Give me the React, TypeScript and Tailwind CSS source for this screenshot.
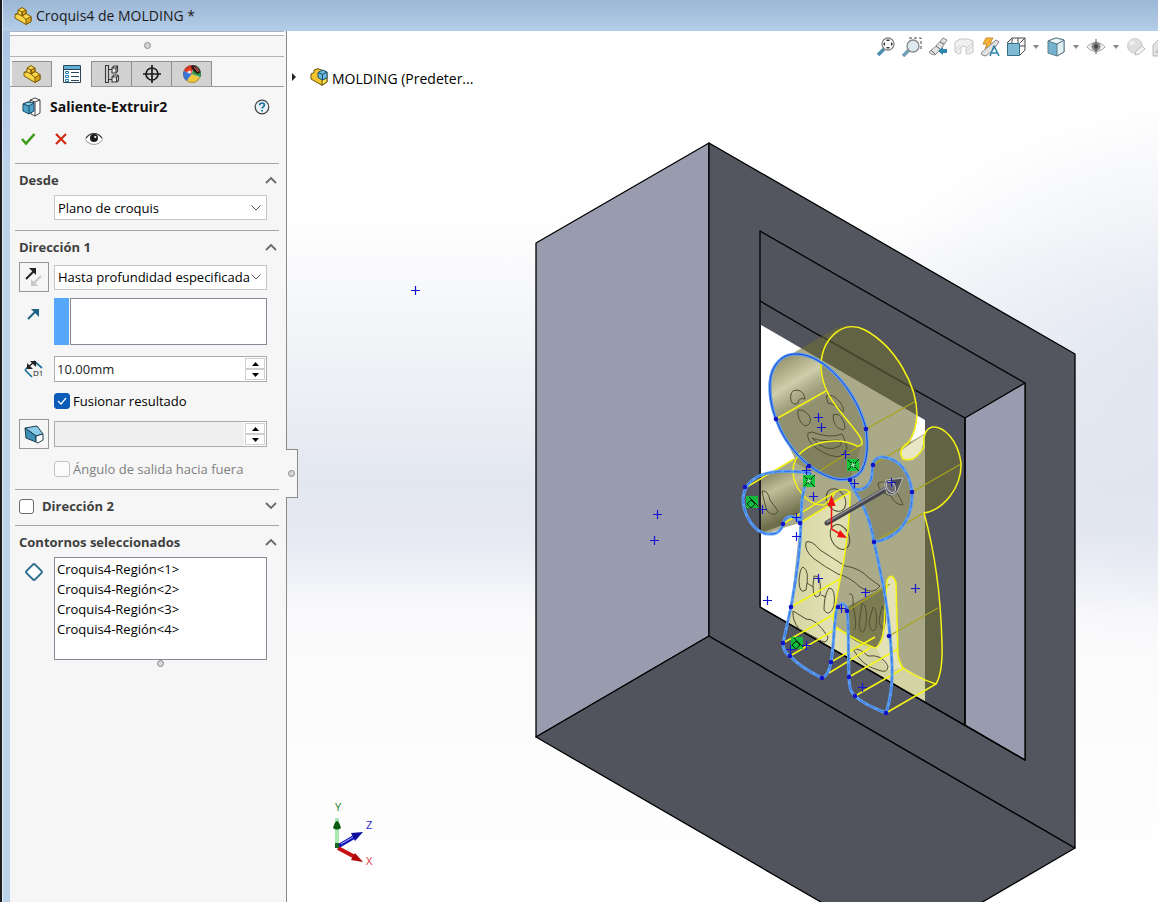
import React, { useState } from 'react';

interface SectionProps {
  title: string;
  open?: boolean;
  children?: React.ReactNode;
}

interface SpinnerProps {
  label: string;
  value: string;
  disabled?: boolean;
}

interface DropdownProps {
  label: string;
  options: string[];
}

const YELLOW = '#f4f414';
const SKETCH = '#5aa0f6';
const NAVY = '#1212c8';

const PartIcon = () => (
  <svg viewBox="0 0 18 18" className="h-[18px] w-[18px] shrink-0" stroke="#7a5a08" strokeWidth="1" strokeLinejoin="round">
    <path d="M4 3l4-2.500 4 2.500v3.500l5 3v5l-5 3-11-6.500V7.500L4 6z" fill="#f9d548" />
    <path d="M8 5l4-2v3.500L8 9zM12 12.500l5-3v5l-5 3z" fill="#dda51c" />
    <path d="M4 3l4 2v4l-4-2M8 9l4 3.500M1 7.500l3-.5M8 9l4-2.500" fill="none" />
  </svg>
);

const AssemblyIcon = () => (
  <svg viewBox="0 0 18 18" className="h-[18px] w-[18px] shrink-0" stroke="#6b5210" strokeWidth="1" strokeLinejoin="round">
    <path d="M1 6l3-1.500V2L8 .7l9 3.500V14l-5 3.300L1 11z" fill="#f5c62c" />
    <path d="M12 11v6.300L17 14V9z" fill="#fbe04f" />
    <path d="M8 4.500L12.500 2 17 4v6l-4.500 2L8 9.500z" fill="#6db8dd" stroke="#15506f" />
    <path d="M8 4.500l4.500 2L17 4M12.500 6.500V12" fill="none" stroke="#15506f" />
  </svg>
);

const PropertyIcon = () => (
  <svg viewBox="0 0 18 18" className="h-[18px] w-[18px]" fill="none" stroke="#2c4656">
    <path d="M.5.5h17v17H.5z" fill="#fff" />
    <path d="M1 1h16v3H1z" fill="#5fb0d8" stroke="none" />
    <path d="M1 4.500h16M8 7.500h8M8 11.500h8M8 15.500h8" />
    <path d="M2.500 6.500h3v2h-3zM2.500 10.500h3v2h-3zM2.500 14.500h3v2h-3z" stroke="#2180b0" />
  </svg>
);

const ConfigIcon = () => (
  <svg viewBox="0 0 18 18" className="h-[18px] w-[18px]" fill="none" stroke="#3a3a3a" strokeWidth="1.100">
    <path d="M2.500.5h3v17h-3zM5.500 4.500H9M5.500 14.500H9" />
    <path d="M9 3l2-2h3.500v5l-1.500 2H9zM9 12l2-2h3.500l1 1v4.500L14 17H9z" fill="#e4e4e4" />
    <path d="M9 3h4v5M13 3l1.500-2M9 12h4.500v5M13.500 12l2-1" />
  </svg>
);

const TargetIcon = () => (
  <svg viewBox="0 0 18 18" className="h-[18px] w-[18px]" fill="none" stroke="#1d1d1d" strokeWidth="1.700">
    <circle cx="9" cy="9" r="6" />
    <path d="M9 0v18M0 9h18" />
  </svg>
);

const AppearanceIcon = () => (
  <svg viewBox="0 0 18 18" className="h-[18px] w-[18px]">
    <path d="M9 9L.6 6A9 9 0 0 1 10 0z" fill="#e03a22" />
    <path d="M9 9L.6 6a9 9 0 0 0 3 10z" fill="#3a78d8" />
    <path d="M9 9L3.500 16a9 9 0 0 0 13.500-3z" fill="#f0c63a" />
    <path d="M9 9l2-9a9 9 0 0 1 6.500 12z" fill="#2f9c4a" />
    <path d="M9 0a9 9 0 0 1 8.500 7L15 9Q10 7 8 2z" fill="#2a1414" />
    <path d="M11 2l4 5M13 1.500l3 5" stroke="#d86a5a" strokeWidth="1" />
    <circle cx="9" cy="9" r="8.500" fill="none" stroke="#55555577" />
    <ellipse cx="6.500" cy="7" rx="2" ry="1.500" fill="#fff" opacity=".8" />
  </svg>
);

const ExtrudeIcon = () => (
  <svg viewBox="0 0 20 20" className="h-5 w-5" strokeLinejoin="round">
    <path d="M8 3l5-2 5 2v13l-5 3-4-2z" fill="#fff" stroke="#444" />
    <path d="M13 5l5-2M13 5v14M13 5L8 3" fill="none" stroke="#444" />
    <path d="M1 7l5-2 6 1v8l-5 3-6-3z" fill="#4fa3cb" stroke="#174a63" />
    <path d="M1 7l6 2 5-3-6-1z" fill="#8fcbe6" stroke="#174a63" />
    <path d="M7 9v8" stroke="#174a63" />
  </svg>
);

const DraftIcon = () => (
  <svg viewBox="0 0 20 20" className="h-5 w-5" stroke="#1b3d4d" strokeLinejoin="round">
    <path d="M1 4l12-2 6 8-7 2z" fill="#8ccbe6" />
    <path d="M1 4l11 8v6L2 14z" fill="#3f90b6" />
    <path d="M12 12l7-2v6l-5 3-2-1z" fill="#fff" />
  </svg>
);

const Chevron = ({ down = false }: { down?: boolean }) => (
  <svg viewBox="0 0 12 8" className="h-2 w-3" fill="none" stroke="#6a6a6a" strokeWidth="1.800">
    <path d={down ? 'M1 1l5 5 5-5' : 'M1 7l5-5 5 5'} />
  </svg>
);

const Section: React.FC<SectionProps> = ({ title, open = true, children }) => (
  <section className="border-t border-[#a6a6a6]">
    <div className="flex h-[31px] items-center justify-between pt-px pr-[2px] pl-1">
      <h3 className="text-[13px] leading-4 font-bold text-[#404040]">{title}</h3>
      <button type="button" aria-label={title}>
        <Chevron down={!open} />
      </button>
    </div>
    {children}
  </section>
);

const Row: React.FC<{ icon?: React.ReactNode; children: React.ReactNode }> = ({ icon, children }) => (
  <div className="grid grid-cols-[30px_minmax(0,1fr)] items-center gap-[5px] pr-3 pl-1">
    <div className="flex justify-center">{icon}</div>
    {children}
  </div>
);

const Dropdown: React.FC<DropdownProps> = ({ label, options }) => (
  <div className="grid h-[25px] items-center border border-[#c6c6c6] bg-white">
    <select
      aria-label={label}
      className="col-start-1 row-start-1 h-[23px] w-full appearance-none bg-transparent pl-[3px] text-[13px] leading-5 text-black outline-none"
    >
      {options.map(o => (
        <option key={o}>{o}</option>
      ))}
    </select>
    <svg viewBox="0 0 10 6" className="pointer-events-none col-start-1 row-start-1 mr-[5px] h-[6px] w-[10px] justify-self-end" fill="none" stroke="#555">
      <path d="M.5.5L5 5 9.500.5" />
    </svg>
  </div>
);

const Spinner: React.FC<SpinnerProps> = ({ label, value, disabled = false }) => (
  <div className={disabled ? 'flex h-[26px] border border-[#ababab] bg-[#efefef]' : 'flex h-[26px] border border-[#ababab] bg-white'}>
    <input
      aria-label={label}
      defaultValue={value}
      disabled={disabled}
      className="min-w-0 flex-1 pl-[2px] text-[13px] leading-5 text-[#222] outline-none"
    />
    <div className="flex w-[22px] flex-col bg-white p-px">
      <button type="button" aria-label={`${label} +`} className="flex flex-1 items-center justify-center border border-[#cfcfcf]">
        <svg viewBox="0 0 7 4" className="h-1 w-[7px]"><path d="M0 4l3.500-4L7 4z" /></svg>
      </button>
      <button type="button" aria-label={`${label} -`} className="flex flex-1 items-center justify-center border border-[#cfcfcf]">
        <svg viewBox="0 0 7 4" className="h-1 w-[7px]"><path d="M0 0l3.500 4L7 0z" /></svg>
      </button>
    </div>
  </div>
);

const Dot = () => <span className="block h-[7px] w-[7px] rounded-full border border-[#8c8c8c] bg-[#d4d4d4]" />;

const tabs = [
  { id: 'Gestor de diseño', icon: <PartIcon /> },
  { id: 'Propiedades', icon: <PropertyIcon /> },
  { id: 'Configuraciones', icon: <ConfigIcon /> },
  { id: 'Cotas', icon: <TargetIcon /> },
  { id: 'Apariencias', icon: <AppearanceIcon /> },
];

const regions = [1, 2, 3, 4];

const PropertyPanel = () => {
  const [merge, setMerge] = useState(true);

  return (
    <aside className="relative z-10 w-[277px] shrink-0 border-r border-[#8a8a8a] bg-[#f6f6f6]">
      <div className="mr-[2px] flex h-[26px] items-center justify-center border-b border-[#b4b4b4]">
        <div className="flex h-full w-full flex-col items-center border-t border-[#a9b4c0]">
          <div className="h-1 w-full border-b border-[#b4b4b4] bg-white" />
          <div className="pt-[6px]"><Dot /></div>
        </div>
      </div>

      <div className="mr-[2px] flex border-b border-[#9a9a9a] pt-1 pl-[2px]" role="tablist">
        {tabs.map((tab, i) => (
          <button
            key={tab.id}
            type="button"
            role="tab"
            aria-label={tab.id}
            aria-selected={i === 1}
            className={
              i === 1
                ? '-mb-px flex h-[26px] w-10 items-center justify-center border-r border-[#8f8f8f] bg-[#f6f6f6]'
                : 'flex h-[25px] w-10 items-center justify-center border-t border-r border-[#8f8f8f] bg-[#d2d2d2]'
            }
          >
            {tab.icon}
          </button>
        ))}
      </div>

      <div className="flex h-[39px] items-center pr-4 pl-3">
        <ExtrudeIcon />
        <h2 className="ml-2 flex-1 text-sm leading-5 font-bold text-[#111]">Saliente-Extruir2</h2>
        <button type="button" aria-label="Ayuda">
          <svg viewBox="0 0 16 16" className="h-4 w-4" fill="none">
            <circle cx="8" cy="8" r="6.800" fill="#e9f1f5" stroke="#424242" strokeWidth="1.200" />
            <path d="M5.700 6.300c0-3 4.700-3 4.700-.2 0 1.700-2.300 1.600-2.300 3.500M8.100 11v1.600" stroke="#17719d" strokeWidth="1.700" />
          </svg>
        </button>
      </div>

      <div className="flex h-[37px] items-start gap-[17px] pt-[6px] pl-[11px]">
        <button type="button" aria-label="Aceptar">
          <svg viewBox="0 0 15 15" className="h-[15px] w-[15px]" fill="none" stroke="#3d9b1d" strokeWidth="2.600">
            <path d="M1 7l4 4.500L13.500 2" />
          </svg>
        </button>
        <button type="button" aria-label="Cancelar">
          <svg viewBox="0 0 15 15" className="h-[15px] w-[15px]" fill="none" stroke="#cf2a12" strokeWidth="2.200">
            <path d="M3 2l10 10M13 2L3 12" />
          </svg>
        </button>
        <button type="button" aria-label="Vista preliminar">
          <svg viewBox="0 0 18 14" className="h-[14px] w-[18px]">
            <path d="M.5 7.500C4 0 14 0 17.500 7.500 14 14 4 14 .5 7.500z" fill="#fff" stroke="#999" />
            <path d="M1 6C5 0 13 0 17 6" fill="none" stroke="#333" strokeWidth="1.200" />
            <circle cx="9" cy="6" r="4" fill="#1c1c1c" />
            <circle cx="10.300" cy="5" r="1.100" fill="#fff" />
          </svg>
        </button>
      </div>

      <div className="mr-[7px] ml-[5px]">
        <Section title="Desde">
          <div className="pb-[10px]">
            <Row>
              <Dropdown label="Desde" options={['Plano de croquis', 'Equidistanciar']} />
            </Row>
          </div>
        </Section>

        <Section title="Dirección 1">
          <Row
            icon={
              <button type="button" aria-label="Invertir dirección" className="flex h-[30px] w-[30px] items-center justify-center border border-[#969696]">
                <svg viewBox="0 0 20 20" className="h-5 w-5" fill="none" strokeWidth="2">
                  <path d="M2 12l8-8" stroke="#222" /><path d="M5 1h7v7z" fill="#222" />
                  <path d="M17 9l-7 7" stroke="#c8c8c8" /><path d="M7 12v7h7z" fill="#c8c8c8" />
                </svg>
              </button>
            }
          >
            <Dropdown label="Condición final" options={['Hasta profundidad especificada', 'Por todo', 'Hasta el siguiente']} />
          </Row>

          <div className="mt-[6px]">
            <Row
              icon={
                <svg viewBox="0 0 14 14" className="mb-4 h-[14px] w-[14px]">
                  <path d="M1 12l8-8" stroke="#1d6384" strokeWidth="2" /><path d="M4 2h8v8z" fill="#1d6384" />
                </svg>
              }
            >
              <div className="flex h-[47px] gap-px">
                <div className="w-[15px] bg-[#55a8fc]" />
                <div role="listbox" aria-label="Dirección de extrusión" className="flex-1 border border-[#868a96] bg-white" />
              </div>
            </Row>
          </div>

          <div className="mt-[11px]">
            <Row
              icon={
                <svg viewBox="0 0 20 18" className="h-[18px] w-5 overflow-visible" fill="none">
                  <path d="M1 10l7 7M10 1l8 7M1 10l3-3" stroke="#1d6f96" strokeWidth="1.700" />
                  <path d="M3 8l7-6" stroke="#222" strokeWidth="1.500" />
                  <path d="M3 3v6h6zM6 1h6v6z" fill="#222" />
                  <text x="9" y="16" fontSize="8" fontFamily="Open Sans, sans-serif" fill="#111">D1</text>
                </svg>
              }
            >
              <Spinner label="Profundidad" value="10.00mm" />
            </Row>
          </div>

          <div className="mt-[11px]">
            <Row>
              <label className="flex h-4 items-center gap-[3px] text-[13px] leading-4 text-black">
                <span className="grid h-4 w-4 place-items-center">
                  <input
                    type="checkbox"
                    checked={merge}
                    onChange={e => setMerge(e.target.checked)}
                    className="col-start-1 row-start-1 h-4 w-4 appearance-none rounded-[3px] border border-[#858585] bg-white checked:border-[#0a5cb8] checked:bg-[#0a5cb8]"
                  />
                  <svg viewBox="0 0 10 8" className="pointer-events-none col-start-1 row-start-1 h-2 w-[10px]" fill="none" stroke="#fff" strokeWidth="1.200">
                    <path d="M1 4l3 3 5-6" />
                  </svg>
                </span>
                Fusionar resultado
              </label>
            </Row>
          </div>

          <div className="mt-[10px]">
            <Row
              icon={
                <button type="button" aria-label="Activar ángulo de salida" className="flex h-[30px] w-[30px] items-center justify-center border border-[#969696]">
                  <DraftIcon />
                </button>
              }
            >
              <Spinner label="Ángulo de salida" value="" disabled />
            </Row>
          </div>

          <div className="mt-3 pb-3">
            <Row>
              <label className="flex h-4 items-center gap-[3px] text-[13px] leading-4 text-[#808080]">
                <input type="checkbox" disabled className="h-4 w-4 appearance-none rounded-[3px] border border-[#c3c3c3] bg-[#fbfbfb]" />
                Ángulo de salida hacia fuera
              </label>
            </Row>
          </div>
        </Section>

        <section className="flex h-9 items-center justify-between border-t border-[#a6a6a6] pr-[2px] pb-[3px] pl-1">
          <label className="flex items-center gap-2 text-[13px] leading-4 font-bold text-[#404040]">
            <input type="checkbox" className="h-[15px] w-[15px] appearance-none rounded-[3px] border border-[#6a6a6a] bg-white" />
            Dirección 2
          </label>
          <button type="button" aria-label="Dirección 2"><Chevron down /></button>
        </section>

        <Section title="Contornos seleccionados">
          <Row
            icon={
              <svg viewBox="0 0 18 18" className="mb-[74px] h-[18px] w-[18px]" fill="#fff" stroke="#2d6f8c" strokeWidth="1.800">
                <path d="M8 1.500q1-1 2 0L16.500 8q1 1 0 2L10 16.500q-1 1-2 0L1.500 10q-1-1 0-2z" />
              </svg>
            }
          >
            <ul className="h-[103px] border border-[#868a96] bg-white pt-px pl-[2px] text-[13px] leading-5 text-black">
              {regions.map(n => (
                <li key={n}>{`Croquis4-Región<${n}>`}</li>
              ))}
            </ul>
          </Row>
          <div className="ml-[39px] flex justify-center pr-[13px]"><Dot /></div>
        </Section>
      </div>

      <button
        type="button"
        aria-label="Ocultar panel"
        className="absolute top-[418px] -right-3 flex h-[49px] w-3 items-center justify-center border-y border-r border-[#8a8a8a] bg-[#f6f6f6]"
      >
        <Dot />
      </button>
    </aside>
  );
};

const crosses = [
  [415, 290], [657, 514], [654, 540], [767, 600], [818, 417], [821, 427], [845, 454], [806, 470], [854, 483],
  [891, 482], [813, 496], [762, 509], [796, 517], [796, 536], [818, 578], [865, 592], [915, 588], [841, 608],
  [806, 645], [790, 649], [862, 687],
];

const nodes = [
  [776, 419], [866, 429], [809, 466], [873, 465], [912, 492], [745, 487], [783, 524], [800, 523], [874, 542],
  [791, 607], [783, 643], [790, 656], [822, 678], [831, 662], [838, 607], [847, 611], [849, 677], [855, 696],
  [886, 713], [889, 636], [850, 480],
];

const relations = [[853, 465], [809, 481]];
const coincidents = [[752, 502], [797, 643]];

const headPath = 'M776 419C769 401 767 378 775 366C782 355 790 354 798 354C812 355 826 364 838 377C852 392 862 412 866 429C868 445 868 458 862 470C856 480 842 481 832 478C808 470 786 447 776 419Z';
const bodyPath = 'M811 473C788 470 768 471 757 477C748 482 744 488 743 498C743 516 755 533 768 534C778 535 782 529 783 524C785 516 791 515 796 518L800 523M811 473C802 486 801 505 801 523C800 560 794 590 791 607L783 643Q783 652 790 656Q800 667 822 678Q829 675 831 662C834 645 834 620 837 608Q842 600 847 608C849 625 848 655 849 677Q849 692 855 696Q863 704 886 713Q893 692 892 665C891 640 887 600 881 575Q876 550 874 542C870 517 861 500 853 488Q851 484 849 478M853 488C862 493 871 486 872 474C872 460 876 457 883 457C900 459 910 473 912 492C913 515 903 528 893 535Q885 540 874 542';
const sweepPath = 'M788 356L833 330C842 324 853 324 865 330C895 346 917 385 917 415Q917 430 910 442L924 434C933 426 943 428 949 434C959 444 963 460 960 474C956 492 943 508 924 513C934 555 939 600 942 643C943 660 940 676 936 684L886 713L783 648L791 607L800 523L783 528L767 534L750 522L743 498L747 486L795 459L776 419L770 390L775 366Z';

// The preview scene keeps its own coordinate space, everything below is drawn in it
const Scene = () => (
  <svg viewBox="287 31 871 871" preserveAspectRatio="xMinYMin slice" className="col-start-1 row-start-1 h-full w-full">
    <defs>
      <clipPath id="pocket"><path d="M761 231L1025 383V760L761 607Z" /></clipPath>
      <clipPath id="backplate"><path d="M761 325L925 420V701L761 607Z" /></clipPath>
      <linearGradient id="cream" x1="0" x2="1">
        <stop offset="0" stopColor="#d3d2a0" />
        <stop offset=".35" stopColor="#e2e1b4" />
        <stop offset=".6" stopColor="#d6d5a6" />
        <stop offset="1" stopColor="#d4d3a4" />
      </linearGradient>
      <linearGradient id="shine" x1="775" y1="365" x2="812" y2="425" gradientUnits="userSpaceOnUse">
        <stop offset="0" stopColor="#9a9972" />
        <stop offset=".35" stopColor="#cfceaa" />
        <stop offset="1" stopColor="#77775200" />
      </linearGradient>
      <linearGradient id="armshine" x1="770" y1="470" x2="792" y2="515" gradientUnits="userSpaceOnUse">
        <stop offset="0" stopColor="#85845e" />
        <stop offset=".4" stopColor="#bfbe98" />
        <stop offset="1" stopColor="#6e6e4c" />
      </linearGradient>
    </defs>

    <g stroke="#000" strokeWidth="1.300" strokeLinejoin="round">
      <path d="M536 243L709 143V636L536 737Z" fill="#999bae" />
      <path d="M536 737L709 636L1075 848L902 949Z" fill="#51535d" />
      <path d="M709 143L1075 354V848L709 636Z" fill="#54565f" />
      <path d="M760 231L1025 383V760L760 607Z" fill="#51535d" />
      <path d="M965 418L1025 383V760L965 725Z" fill="#999bae" />
    </g>
    <path d="M761 325L925 420V701L761 607Z" fill="#fff" />

    <g clipPath="url(#pocket)">
      <path d={sweepPath} fill="#6f6c35" fillOpacity=".59" />
      <path d={headPath} fill="#5a5a38" fillOpacity=".3" />
      <path d="M775 366Q782 354 798 354L820 361Q820 385 829 396L776 419Q768 388 775 366Z" fill="url(#shine)" />
      <path d="M761 476Q785 468 809 473Q801 490 801 514L788 517L783 525L761 533Z" fill="url(#armshine)" />
      <path d="M873 465Q873 457 883 457C900 459 910 473 912 492C913 515 903 528 893 535L874 542Q868 510 853 488Q872 490 873 465Z" fill="#55553a" fillOpacity=".35" />
      <path d="M793 461C805 440 838 436 861 446L850 479Q822 480 793 461Z" fill="#5d5d36" fillOpacity=".3" />
      <g clipPath="url(#backplate)">
        <path d="M801 523L838 500L850 492Q850 533 840 580L833 617L837 628L870 647L925 680V701L783 646L791 607Q799 560 801 523Z" fill="url(#cream)" />
        <path d="M849 640L880 640L903 668L936 684L925 701L849 657Z" fill="#d4d3a4" />
      </g>
      <path d="M847 607L888 585L886 610Q884 640 875 648Q860 645 849 637Z" fill="#7c7c52" />
      <path d="M887 580Q892 571 896 585L898 660L903 668L888 670Q880 655 876 648Q886 640 886 610Z" fill="#e4e2b6" />
      <path d="M900 452Q908 445 924 435Q924 452 913 460Q901 462 900 452Z" fill="#e9e7c4" />
    </g>

    {/* creases and pocket edges showing through the preview */}
    <path d="M760 607L1025 760M965 418V725M760 301L822 337M915 390L965 418" fill="none" stroke="#000" strokeWidth="1.300" />
    <path d="M821 336L916 390" stroke="#42422c" strokeWidth="1.500" />
    <g fill="none" stroke="#4f4f35" strokeWidth="1">
      <path d="M791 401Q789 390 797 390Q804 391 805 399Q799 397 798 403Q794 406 791 401ZM826 396Q832 393 840 402Q845 410 843 412Q837 405 828 403ZM798 410Q805 409 810 417Q812 425 805 426Q797 421 798 410ZM833 415Q839 412 843 420Q847 429 843 430Q833 428 833 415Z" />
      <path d="M808 433Q806 440 816 448Q832 459 842 456L847 448Q845 439 842 434Q830 439 812 432ZM812 438Q820 442 838 440Q843 442 840 446Q826 454 812 438Z" />
      <path d="M762 491Q768 490 770 500L778 511Q775 518 767 511Q764 502 762 491ZM878 483Q887 479 891 488Q899 493 903 505Q895 505 891 496Q878 492 878 483Z" />
      <ellipse cx="836" cy="500" rx="9" ry="12" transform="rotate(-30 836 500)" />
      <ellipse cx="840" cy="537" rx="9" ry="13" transform="rotate(-25 840 537)" />
      <path d="M806 542Q812 540 820 550L845 566Q860 568 869 578L880 586Q873 596 860 587Q850 577 838 574Q825 567 813 558Q804 550 806 542Z" />
      <path d="M803 567Q810 570 806 590Q799 595 799 580Q800 568 803 567ZM814 576Q822 574 820 595Q813 602 813 585ZM807 583L813 587M821 595L826 597M829 588Q836 588 834 606Q829 618 824 610Q824 595 829 588Z" />
      <path d="M793 611L806 619Q816 618 828 637Q827 646 818 639L799 629Q792 620 793 611ZM853 649Q860 648 868 656Q882 654 888 666Q888 674 878 670Q862 666 853 649Z" />
      <path d="M849 594Q854 592 853 605Q858 630 854 630M862 603Q868 605 866 625Q862 640 859 625ZM873 607Q878 608 876 628Q871 636 869 622ZM882 606Q888 612 884 628Q880 630 879 620Z" />
    </g>

    {/* far side of the extrusion */}
    <g fill="none" stroke="#a8a519" strokeWidth="1.300">
      <path d="M866 429L916 401M818 472L861 445M873 465L911 442M912 492L961 464M874 542L924 513M889 636L938 608M847 611L890 584" />
    </g>
    <g fill="none" stroke={YELLOW} strokeWidth="1.500" strokeLinejoin="round">
      <path d="M908 443Q916 432 917 415C917 385 895 346 865 330C842 318 821 340 821 367C822 395 840 410 855 430Q868 446 857 446C834 434 794 444 793 470C793 488 808 506 824 505Q832 499 835 492Q844 487 850 492Q850 533 840 580L833 617Q833 625 837 628Q860 643 875 648Q882 646 884 627L887 580Q892 571 896 583L898 655Q900 664 903 668Q915 677 936 684Q943 672 942 643Q940 570 924 513C943 510 962 488 961 463C958 440 944 426 932 427Q922 430 924 447Q915 463 903 459Q897 450 908 443Z" />
      <path d="M776 419L826 391M745 488L794 459M783 524L835 492M800 523L850 492M791 607L840 579M783 643L833 615M790 656L838 628M831 662L875 637M829 673L870 648M849 677L898 649M855 696L904 668M886 713L936 684" />
    </g>

    <g fill="none" strokeLinejoin="round">
      <path d={headPath} stroke={SKETCH} strokeWidth="3.200" />
      <path d={bodyPath} stroke={SKETCH} strokeWidth="3" />
      <path d={headPath} stroke="#1a3fd0" strokeWidth="1" />
      <path d={bodyPath} stroke="#1f50d4" strokeWidth="1" strokeOpacity=".6" strokeDasharray="7 3" />
    </g>
    {nodes.map(([x, y]) => (
      <circle key={`${x}-${y}`} cx={x} cy={y} r="2.300" fill={NAVY} />
    ))}

    {relations.map(([x, y]) => (
      <g key={`${x}-${y}`} stroke="#04240b">
        <path d={`M${x - 6} ${y - 6}h12v12h-12z`} fill="#12c93c" stroke="none" />
        <path d={`M${x - 5} ${y + 5}l3-3M${x + 2} ${y - 2}l4-4M${x + 2} ${y + 2}l4 4M${x - 5} ${y - 5}l3 3`} />
        <path d={`M${x - 2} ${y - 2}h4v4h-4z`} fill="#8fe3a2" strokeDasharray="1 1" />
      </g>
    ))}
    {coincidents.map(([x, y]) => (
      <g key={`${x}-${y}`} stroke="#04240b" fill="none">
        <path d={`M${x - 6} ${y - 6}h12v12h-12z`} fill="#12b93c" stroke="none" />
        <path d={`M${x - 5} ${y + 2}l4-4 4 4-4 4zM${x - 3} ${y - 5}l9 9`} />
      </g>
    ))}
    <path d={crosses.map(([x, y]) => `M${x - 4} ${y + 0.5}h9M${x + 0.5} ${y - 4}v9`).join('')} stroke="#1414d2" strokeWidth="1.200" />

    <path d="M827 523L888 488" stroke="#46464c" strokeWidth="5" strokeLinecap="round" />
    <path d="M827 522L887 487" stroke="#8e8e94" strokeWidth="1.500" strokeLinecap="round" />
    <path d="M886 480L903 478L897 492Q893 496 888 494Q883 486 886 480Z" fill="#4e4e55" stroke="#b9b9bd" strokeWidth="1" />
    <ellipse cx="891" cy="487" rx="4" ry="6" transform="rotate(-30 891 487)" fill="#6c6c73" stroke="#c4c4c8" />
    <path d="M887 482.500h9M891.500 478v9" stroke={NAVY} />

    <g stroke="#f01010" fill="#f01010" strokeWidth="1.500">
      <path d="M831.500 529V505M831.500 529L840 534" />
      <path d="M831.500 495l4 11h-8zM847 538l-10-1 3-7z" stroke="none" />
    </g>

    {/* orientation triad */}
    <path d="M335 818h4v29h-4z" fill="#a9e8b0" />
    <path d="M333 828Q337 814 341 828Q337 831 333 828z" fill="#075c12" />
    <path d="M337 847L354 837" stroke="#1414b8" strokeWidth="4" />
    <path d="M363 832l-12 1 4 8z" fill="#0c0c9c" />
    <path d="M341 844l12-7" stroke="#a9b4ff" strokeWidth="1" />
    <path d="M338 848L355 857" stroke="#c41010" strokeWidth="4" />
    <path d="M363 862l-8-9-4 7z" fill="#b00808" />
    <path d="M335 843h4v5h-4z" fill="#16661e" />
    <g fontFamily="Open Sans, sans-serif" fontSize="11">
      <text x="335" y="811" fill="#1f7a2a">Y</text>
      <text x="366" y="829" fill="#2a2ad0">Z</text>
      <text x="366" y="865" fill="#e03a3a">X</text>
    </g>
  </svg>
);

const toolbarIcons = [
  {
    id: 'Zoom para ajustar',
    art: (
      <>
        <path d="M2 18l6-6" stroke="#4d8fae" strokeWidth="3.500" />
        <circle cx="12" cy="7" r="6" fill="#f4f6f7" stroke="#888" strokeWidth="1.300" />
        <path d="M12 2l2 2h-4zM12 12l2-2h-4zM7 7l2-2v4zM17 7l-2-2v4z" fill="#333" />
      </>
    ),
  },
  {
    id: 'Zoom encuadre',
    art: (
      <>
        <path d="M7 1h12v13" fill="none" stroke="#444" strokeDasharray="3 2" />
        <path d="M1 19l6-6" stroke="#6f9fb5" strokeWidth="3.500" />
        <circle cx="11" cy="9" r="6" fill="#dce9ef" stroke="#888" strokeWidth="1.300" />
      </>
    ),
  },
  {
    id: 'Vista previa',
    art: (
      <>
        <path d="M1 15L8 9l7-8 4 2-6 9-6 6-4-1z" fill="#e2e2e2" stroke="#8a8a8a" />
        <path d="M3 13l4 4M8 9l4 3M12 5l4 2" stroke="#666" />
        <path d="M10 14l5-4v2h4v4h-4v2z" fill="#2e86ab" />
      </>
    ),
  },
  {
    id: 'Vista de sección',
    art: (
      <>
        <path d="M1 5l5-3h8l5 2v11l-4 2h-3v-7q-3-2-5 0v6l-3 1-3-2z" fill="#f0f0f0" stroke="#c6c6c6" />
        <path d="M2 12l4-4M2 15l5-5M13 14l5-5M13 11l5-5" stroke="#d2d2d2" fill="none" />
      </>
    ),
  },
  {
    id: 'Anotaciones',
    art: (
      <>
        <path d="M6 1h7l-3 5h4l-9 6 2-5H3z" fill="#f8b334" stroke="#c98a2a" />
        <path d="M1 16l7-6 8-7 3 2-7 9-6 5-4-1z" fill="#e2e2e2" stroke="#8a8a8a" />
        <path d="M10 19l4-10 5 10M12 16h5" fill="none" stroke="#2e86ab" strokeWidth="1.600" />
      </>
    ),
  },
  {
    id: 'Orientación de vista',
    caret: true,
    art: (
      <>
        <path d="M6 1h13v12l-5 5M6 1L1 6M19 1l-5 5M6 1v6M12 1v6M14 9h5" fill="none" stroke="#444" />
        <path d="M1.500 6.500h12v12h-12z" fill="#7fbad4" stroke="#3b7089" />
      </>
    ),
  },
  {
    id: 'Estilo de visualización',
    caret: true,
    art: (
      <>
        <path d="M2 4l8-3 8 2v12l-7 4-9-3z" fill="#74b3cf" stroke="#5c7b88" />
        <path d="M11 7l7-4v12l-7 4z" fill="#dff0f7" stroke="#5c7b88" />
        <path d="M2 4l9 3 7-4-8-2z" fill="#eef7fb" stroke="#5c7b88" />
      </>
    ),
  },
  {
    id: 'Ocultar/mostrar',
    caret: true,
    art: (
      <>
        <path d="M1 10C5 4 15 4 19 10 15 16 5 16 1 10z" fill="#f0f0f0" stroke="#aaa" />
        <circle cx="10" cy="9.500" r="4.500" fill="#888" />
        <path d="M10 2v15" stroke="#555" />
        <circle cx="10" cy="9.500" r="2" fill="#444" />
      </>
    ),
  },
  {
    id: 'Editar apariencia',
    art: (
      <>
        <circle cx="9" cy="9" r="7.500" fill="#dedede" stroke="#d0d0d0" />
        <ellipse cx="6" cy="6" rx="3" ry="2" fill="#f0f0f0" />
        <path d="M9 18l1-4 6-5 3 3-6 5z" fill="#f2f2f2" stroke="#bbb" />
      </>
    ),
  },
];

const Viewport = () => (
  <main className="grid min-w-0 flex-1 overflow-hidden bg-[radial-gradient(45%_32%_at_108%_40%,#dfe4ef,transparent),linear-gradient(180deg,#ffffff_0%,#fefefe_22%,#e3e7f0_52%,#e6e9f2_58%,#fafafc_67%,#ffffff_100%)]">
    <Scene />
    <div className="col-start-1 row-start-1 flex items-start justify-between">
      <div className="mt-9 ml-1 flex items-center">
        <svg viewBox="0 0 6 8" className="mr-[13px] mb-1 h-2 w-[6px]"><path d="M1 0l4 4-4 4z" fill="#222" /></svg>
        <span className="mb-1"><AssemblyIcon /></span>
        <a href="#molding" className="ml-1 text-sm leading-6 text-black">MOLDING (Predeter...</a>
      </div>
      <div role="toolbar" aria-label="Vista" className="mt-[6px] flex items-center gap-[6px] overflow-hidden">
        {toolbarIcons.map(item => (
          <React.Fragment key={item.id}>
            <button type="button" aria-label={item.id}>
              <svg viewBox="0 0 20 20" className="h-5 w-5" strokeLinejoin="round">{item.art}</svg>
            </button>
            {item.caret && (
              <button type="button" aria-label={`${item.id}, opciones`} className="flex w-2 justify-center">
                <svg viewBox="0 0 6 4" className="h-1 w-[6px]"><path d="M0 0h6L3 4z" fill="#888" /></svg>
              </button>
            )}
          </React.Fragment>
        ))}
        <button type="button" aria-label="Aplicar escena" className="w-[6px] overflow-hidden">
          <svg viewBox="0 0 20 20" className="h-5 w-5">
            <path d="M1 8l6-6h12v17H1z" fill="#e2e2e2" stroke="#bbb" />
            <path d="M3 16l4-5 3 5z" fill="#bbb" />
          </svg>
        </button>
      </div>
    </div>
  </main>
);

const App = () => (
  <div className="flex min-h-screen bg-[#b9d0e9] font-['Open_Sans',sans-serif]">
    <div className="w-[3px] shrink-0 border-r border-[#e4edf6] bg-[#1c1c20]" />
    <div className="flex min-w-0 flex-1 flex-col">
      <header className="flex h-[31px] shrink-0 items-center bg-linear-to-b from-[#9cb7d6] to-[#b4cde8] pl-[11px]">
        <PartIcon />
        <h1 className="ml-1 text-sm leading-5 text-[#1a1a1a]">Croquis4 de MOLDING *</h1>
      </header>
      <div className="flex flex-1">
        <div className="w-[7px] shrink-0 bg-linear-to-b from-[#a9c4e2] to-[#bbd2eb] to-15%" />
        <PropertyPanel />
        <Viewport />
      </div>
    </div>
  </div>
);

export default App;
